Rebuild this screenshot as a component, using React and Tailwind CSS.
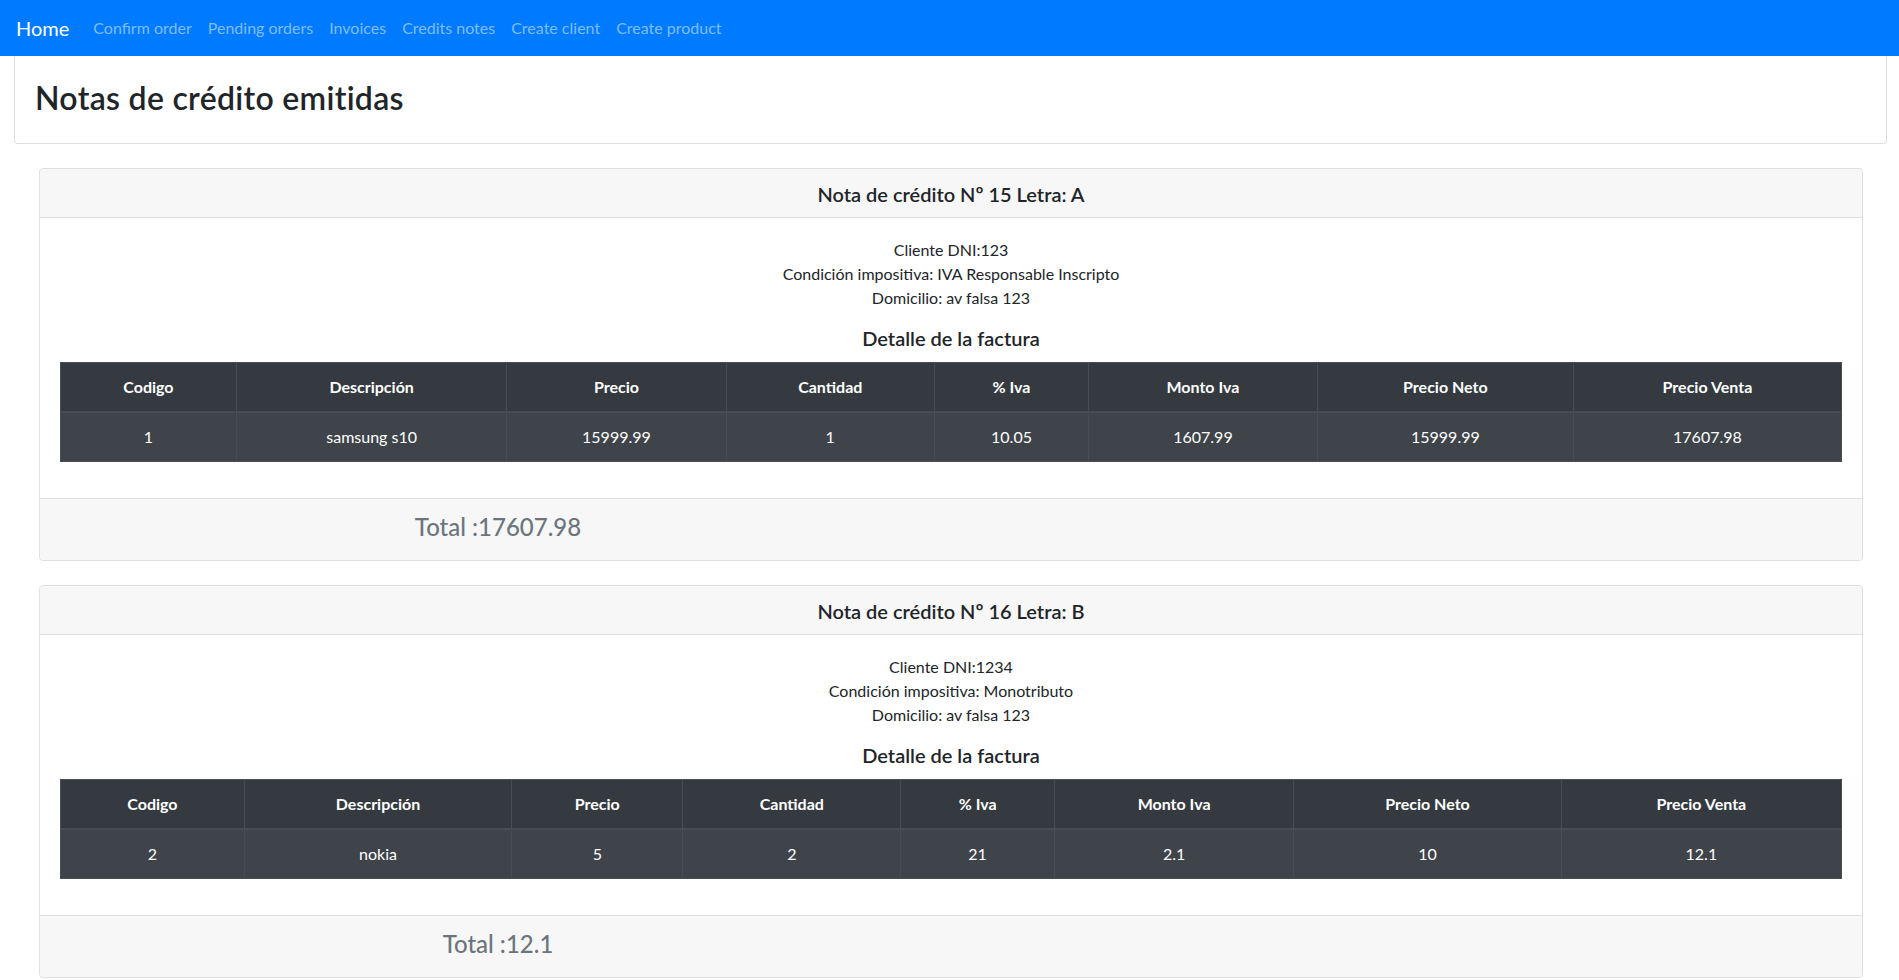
import React from 'react';

const notes = [
  {
    id: 15,
    letter: 'A',
    dni: '123',
    condition: 'IVA Responsable Inscripto',
    address: 'av falsa 123',
    items: [{ code: 1, desc: 'samsung s10', price: '15999.99', qty: 1, iva: '10.05', ivaAmount: '1607.99', net: '15999.99', sale: '17607.98' }],
    total: '17607.98',
  },
  {
    id: 16,
    letter: 'B',
    dni: '1234',
    condition: 'Monotributo',
    address: 'av falsa 123',
    items: [{ code: 2, desc: 'nokia', price: '5', qty: 2, iva: '21', ivaAmount: '2.1', net: '10', sale: '12.1' }],
    total: '12.1',
  },
];

const headers = ['Codigo', 'Descripción', 'Precio', 'Cantidad', '% Iva', 'Monto Iva', 'Precio Neto', 'Precio Venta'];
const links = ['Confirm order', 'Pending orders', 'Invoices', 'Credits notes', 'Create client', 'Create product'];

const NoteCard = ({ note }) => (
  <div className="ml-[39px] mr-[36px] mb-[24px] border border-[#dfdfdf] rounded-[4px] bg-white">
    {/* Header */}
    <div className="bg-[#f7f7f7] border-b border-[#dfdfdf] px-5 pt-[13px] pb-[11px] text-center rounded-t-[4px]">
      <h5 className="text-[20px] leading-[24px] font-semibold text-[#212529]">
        Nota de crédito Nº {note.id} Letra: {note.letter}
      </h5>
    </div>

    {/* Body */}
    <div className="p-5">
      <div className="text-center text-[16px] leading-[24px] text-[#212529] mb-4">
        <div>Cliente DNI:{note.dni}</div>
        <div>Condición impositiva: {note.condition}</div>
        <div>Domicilio: {note.address}</div>
      </div>
      <h5 className="text-center text-[20px] leading-[24px] font-semibold text-[#212529] mb-[12px]">Detalle de la factura</h5>
      <table className="w-full table-auto border-collapse text-white text-[16px] leading-[24px] mb-4">
        <thead>
          <tr className="bg-[#343a40]">
            {headers.map(h => (
              <th key={h} className="border border-[#454d55] border-b-2 px-3 py-3 font-bold text-center">{h}</th>
            ))}
          </tr>
        </thead>
        <tbody>
          {note.items.map(item => (
            <tr key={item.code} className="bg-[#3e444a]">
              <td className="border border-[#454d55] px-3 py-3 text-center">{item.code}</td>
              <td className="border border-[#454d55] px-3 py-3 text-center">{item.desc}</td>
              <td className="border border-[#454d55] px-3 py-3 text-center">{item.price}</td>
              <td className="border border-[#454d55] px-3 py-3 text-center">{item.qty}</td>
              <td className="border border-[#454d55] px-3 py-3 text-center">{item.iva}</td>
              <td className="border border-[#454d55] px-3 py-3 text-center">{item.ivaAmount}</td>
              <td className="border border-[#454d55] px-3 py-3 text-center">{item.net}</td>
              <td className="border border-[#454d55] px-3 py-3 text-center">{item.sale}</td>
            </tr>
          ))}
        </tbody>
      </table>
    </div>

    {/* Footer */}
    <div className="bg-[#f7f7f7] border-t border-[#dfdfdf] px-5 pt-[13px] pb-[11px] rounded-b-[4px]">
      <div className="flex -mx-[15px]">
        <div className="w-1/2 text-center">
          <h4 className="text-[24px] leading-[29px] font-medium text-[#6c757d] mb-2">Total :{note.total}</h4>
        </div>
        <div className="w-1/2" />
      </div>
    </div>
  </div>
);

export default function App() {
  return (
    <div className="min-h-screen bg-white font-['Lato','Liberation_Sans',sans-serif] text-[#212529]">
      {/* Navbar */}
      <nav className="h-[56px] bg-[#007bff] flex items-center px-4">
        <a className="text-white text-[20px] leading-[30px] mr-4">Home</a>
        <div className="flex items-center">
          {links.map(l => (
            <a key={l} className="px-2 text-[16px] leading-[24px] text-[#7fbdff]">{l}</a>
          ))}
        </div>
      </nav>

      {/* Title */}
      <div className="ml-[14px] mr-[12px] border border-[#dfdfdf] border-t-0 rounded-b-[4px] px-5 pt-[23px] pb-[18px] mb-[24px]">
        <h2 className="text-[32px] leading-[38px] font-semibold tracking-[0.3px] text-[#212529] mb-2">Notas de crédito emitidas</h2>
      </div>

      {notes.map(n => <NoteCard key={n.id} note={n} />)}
    </div>
  );
}
